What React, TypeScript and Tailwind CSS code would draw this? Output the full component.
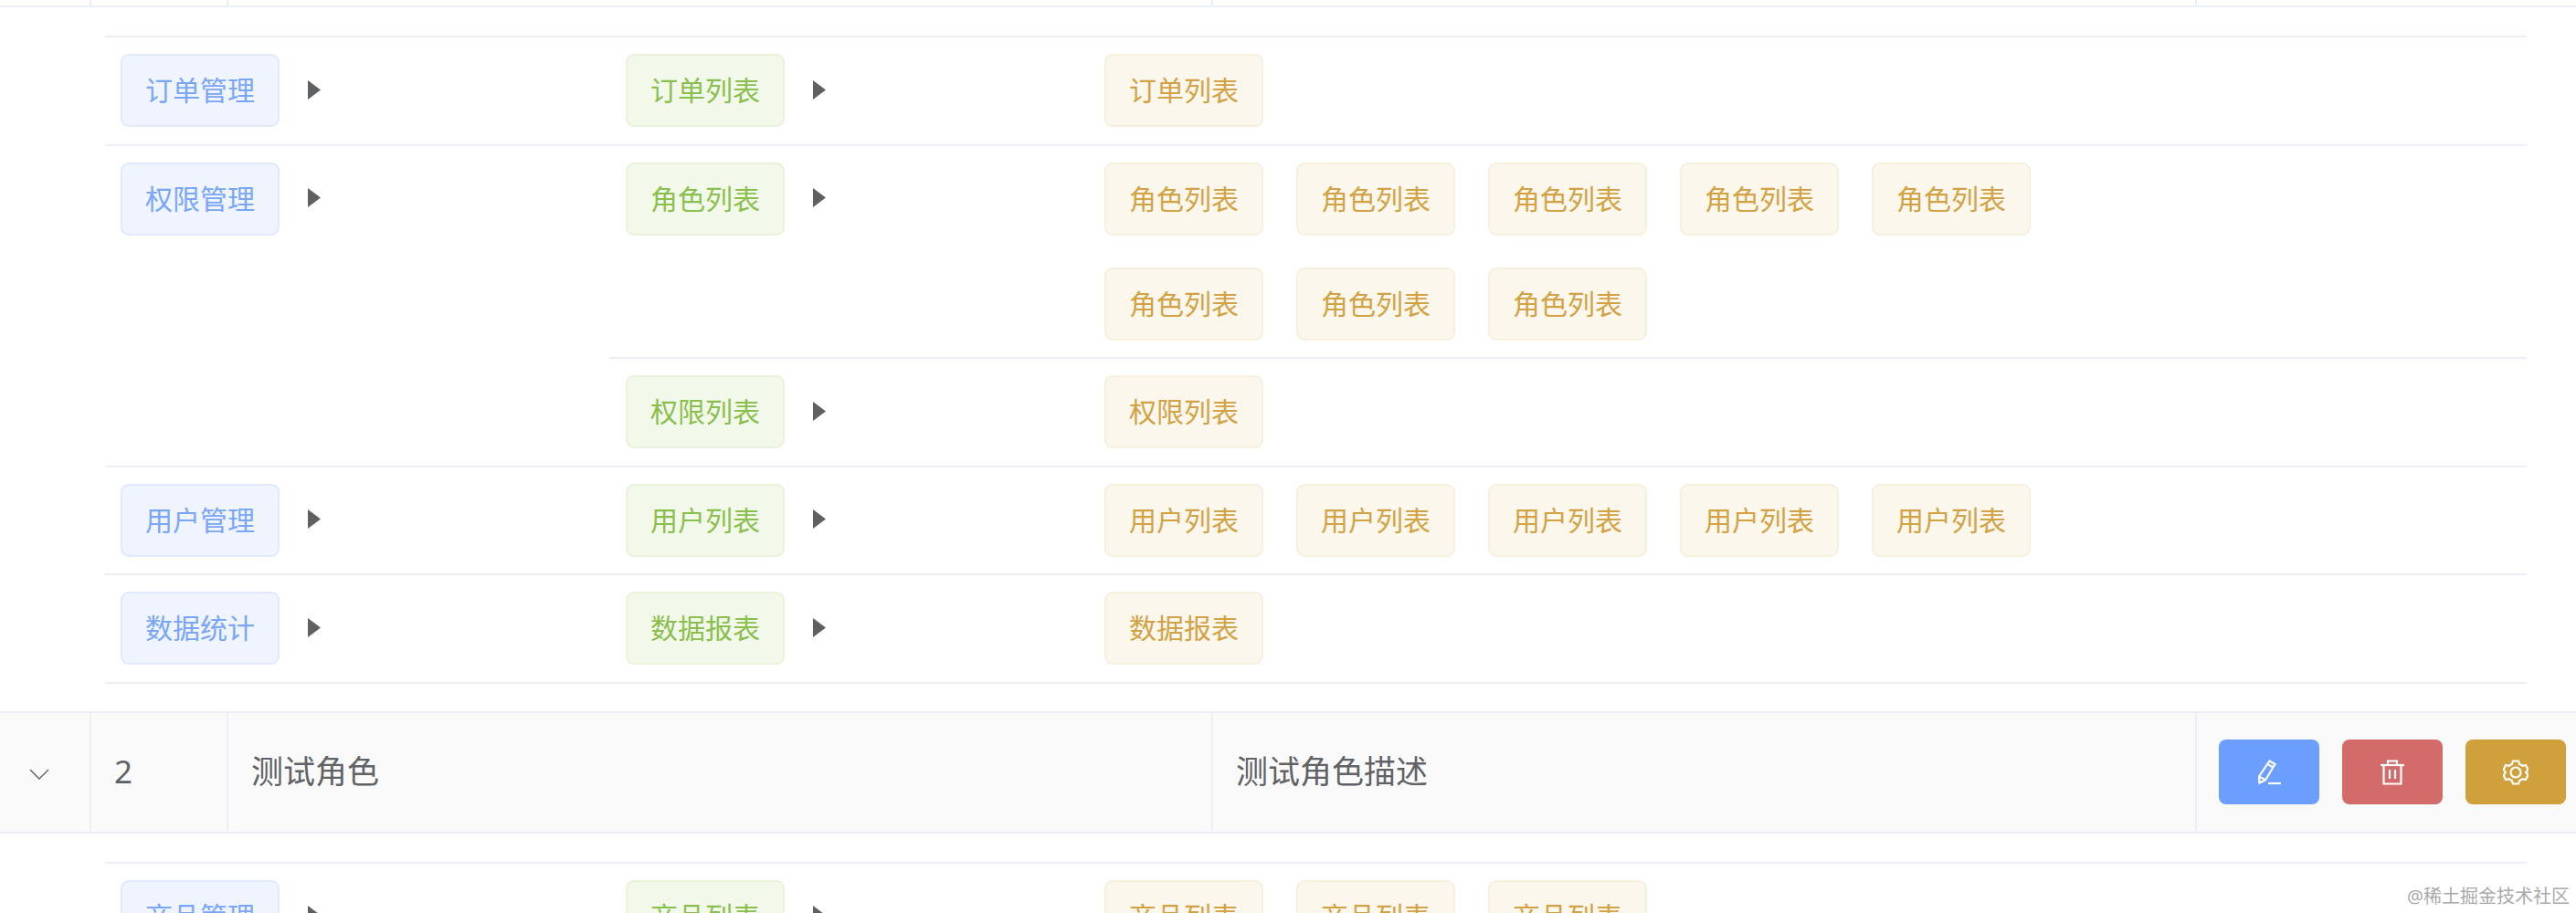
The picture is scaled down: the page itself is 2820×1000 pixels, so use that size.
import React from "react";

const FONT = "[font-family:'Noto_Sans','Noto_Sans_CJK_SC',sans-serif]";

function Tag({ color, children }: { color: "blue" | "green" | "gold"; children: React.ReactNode }) {
  const c = {
    blue: "bg-[#eff4ff] border-[#e1e9fb] text-[#79a6f8]",
    green: "bg-[#f3f9ea] border-[#e8f3d9] text-[#8abf4e]",
    gold: "bg-[#fbf7ec] border-[#f6f0df] text-[#d2a244]",
  }[color];
  return (
    <span className={`inline-flex h-[80px] w-[174px] shrink-0 items-center justify-center rounded-[9px] border-2 text-[30px] leading-none ${c}`}>
      {children}
    </span>
  );
}

function Arrow() {
  return (
    <svg width="14" height="21" viewBox="0 0 14 21" className="ml-[31px] shrink-0 -translate-y-px">
      <path d="M0 0 L14 10.5 L0 21 Z" fill="#5f6062" />
    </svg>
  );
}

function Leafs({ label, count }: { label: string; count: number }) {
  return (
    <div className="flex w-[1100px] flex-wrap gap-x-[36px] gap-y-[35px]">
      {Array.from({ length: count }).map((_, i) => (
        <Tag key={i} color="gold">{label}</Tag>
      ))}
    </div>
  );
}

type Sub = { name: string; leafs: number; leafLabel?: string };

function SubRow({ sub, first }: { sub: Sub; first: boolean }) {
  return (
    <div className={`flex pt-[18px] pb-[18.5px] pl-[18px] ${first ? "" : "border-t-2 border-[#ebeef5]"}`}>
      <div className="flex h-[80px] w-[524px] shrink-0 items-center">
        <Tag color="green">{sub.name}</Tag>
        <Arrow />
      </div>
      <Leafs label={sub.leafLabel ?? sub.name} count={sub.leafs} />
    </div>
  );
}

function Group({ name, subs }: { name: string; subs: Sub[] }) {
  return (
    <div className="flex border-b-2 border-[#ebeef5]">
      <div className="w-[552px] shrink-0 pt-[18px] pl-[17px]">
        <div className="flex h-[80px] items-center">
          <Tag color="blue">{name}</Tag>
          <Arrow />
        </div>
      </div>
      <div className="flex-1">
        {subs.map((s, i) => (
          <SubRow key={s.name} sub={s} first={i === 0} />
        ))}
      </div>
    </div>
  );
}

function Panel({ children, pb }: { children: React.ReactNode; pb: string }) {
  return (
    <div className={`pt-[31px] pl-[115px] pr-[54px] ${pb}`}>
      <div className="border-t-2 border-[#ebeef5]">{children}</div>
    </div>
  );
}

function IconButton({ bg, children }: { bg: string; children: React.ReactNode }) {
  return <button className={`flex h-[71px] w-[110px] items-center justify-center rounded-[8px] ${bg}`}>{children}</button>;
}

function RoleRow({ id, name, desc }: { id: string; name: string; desc: string }) {
  return (
    <div className="flex h-[134px] border-y-2 border-[#ebeef5] bg-[#fafafa] text-[35px] text-[#606266]">
      <div className="flex w-[100px] shrink-0 items-center justify-center border-r-2 border-[#ebeef5]">
        <svg width="22" height="12" viewBox="0 0 22 12" fill="none" stroke="#606266" strokeWidth="1.4" className="mr-[12px] mt-[4px]">
          <path d="M1 1 L11 11 L21 1" />
        </svg>
      </div>
      <div className="flex w-[150px] shrink-0 items-center border-r-2 border-[#ebeef5] pl-[25px]">{id}</div>
      <div className="flex w-[1078px] shrink-0 items-center border-r-2 border-[#ebeef5] pl-[25px]">{name}</div>
      <div className="flex w-[1077px] shrink-0 items-center border-r-2 border-[#ebeef5] pl-[25px]">{desc}</div>
      <div className="flex flex-1 items-center gap-[25px] pl-[24px]">
        <IconButton bg="bg-[#6b9eff]">
          <svg width="28" height="28" viewBox="0 0 28 28" fill="none" stroke="#fff" strokeWidth="2.2">
            <path d="M14.5 1.5 L20.5 5 L10 22.5 L3.5 25.5 L3 18.5 Z" />
            <path d="M12.5 5 L18.5 8.5" />
            <path d="M4 19 L9.5 22" />
            <path d="M13 26 H27" />
          </svg>
        </IconButton>
        <IconButton bg="bg-[#d36b6b]">
          <svg width="28" height="28" viewBox="0 0 28 28" fill="none" stroke="#fff" strokeWidth="2.2">
            <path d="M1 6 H27" />
            <path d="M9 6 V1.5 H19 V6" />
            <path d="M4.5 6 V26.5 H23.5 V6" />
            <path d="M11 11 V21 M17 11 V21" />
          </svg>
        </IconButton>
        <IconButton bg="bg-[#cfa03c]">
          <svg width="28" height="28" viewBox="0 0 28 28" fill="none" stroke="#fff" strokeWidth="2.2">
            <path d="M11 1.5 H17 L18.2 5 L21.5 6.8 L25 6 L27.5 11 L25.2 14 L27.5 17 L25 22 L21.5 21.2 L18.2 23 L17 26.5 H11 L9.8 23 L6.5 21.2 L3 22 L0.8 17 L2.8 14 L0.8 11 L3 6 L6.5 6.8 L9.8 5 Z" />
            <circle cx="14" cy="14" r="5.5" />
          </svg>
        </IconButton>
      </div>
    </div>
  );
}

export default function App() {
  return (
    <div className={`relative h-[1000px] w-[2820px] overflow-hidden bg-white ${FONT}`}>
      <div className="flex h-[8px] border-b-2 border-[#ebeef5]">
        <div className="w-[100px] border-r-2 border-[#ebeef5]" />
        <div className="w-[150px] border-r-2 border-[#ebeef5]" />
        <div className="w-[1078px] border-r-2 border-[#ebeef5]" />
        <div className="w-[1077px] border-r-2 border-[#ebeef5]" />
      </div>
      <Panel pb="pb-[30px]">
        <Group name="订单管理" subs={[{ name: "订单列表", leafs: 1 }]} />
        <Group name="权限管理" subs={[{ name: "角色列表", leafs: 8 }, { name: "权限列表", leafs: 1 }]} />
        <Group name="用户管理" subs={[{ name: "用户列表", leafs: 5 }]} />
        <Group name="数据统计" subs={[{ name: "数据报表", leafs: 1 }]} />
      </Panel>
      <RoleRow id="2" name="测试角色" desc="测试角色描述" />
      <Panel pb="pb-0">
        <Group name="商品管理" subs={[{ name: "商品列表", leafs: 3 }]} />
      </Panel>
      <div className="absolute bottom-[6px] right-[7px] text-[20px] leading-[24px] text-[#aaaaaa]">@稀土掘金技术社区</div>
    </div>
  );
}
